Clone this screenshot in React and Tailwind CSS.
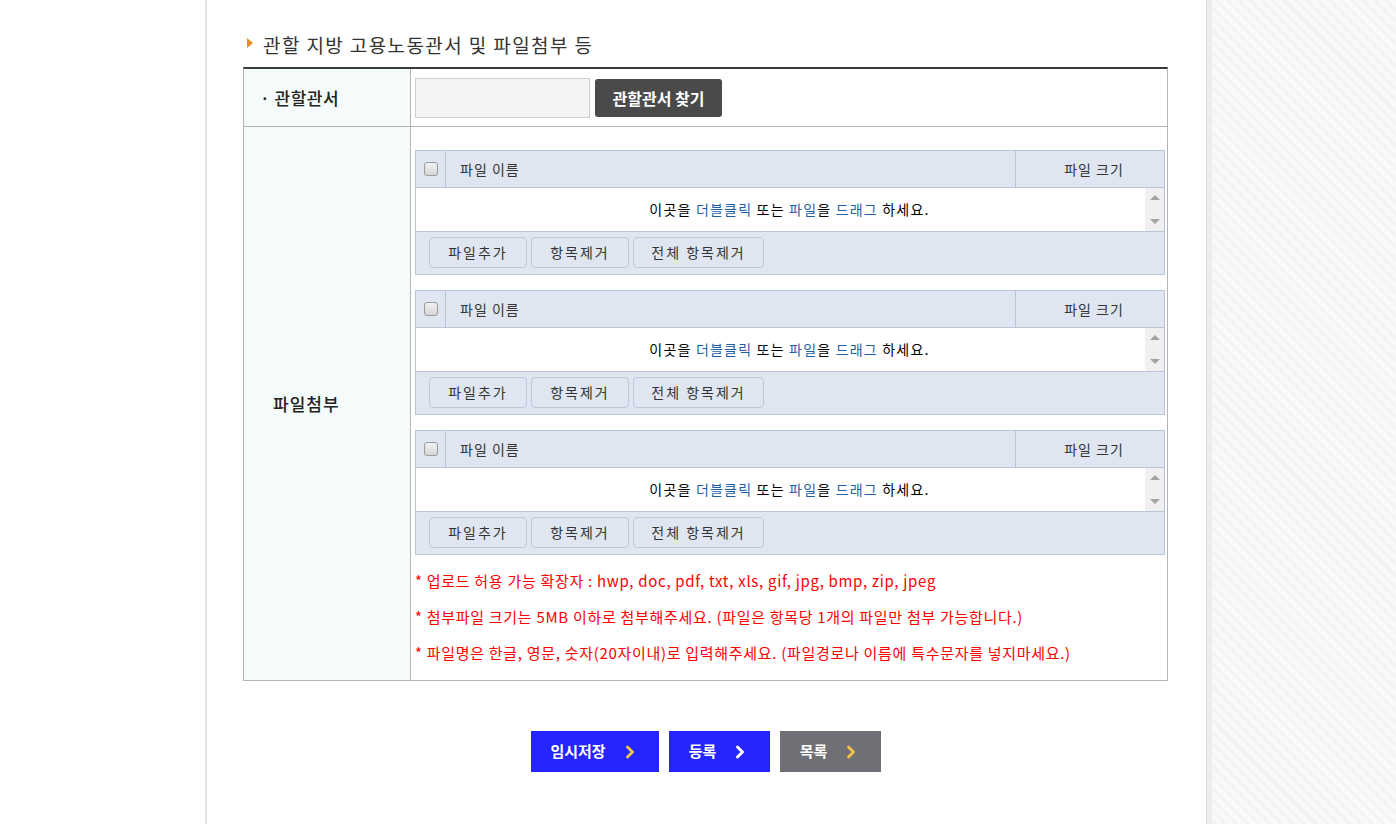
import { ChevronRight } from 'lucide-react'

const font = "font-['Noto_Sans_CJK_KR','Noto_Sans',sans-serif]"

function Checkbox() {
  return (
    <span className="block w-[14px] h-[14px] rounded-[3px] border border-[#9a9a9a] bg-gradient-to-b from-[#f2f2f2] to-[#d6d6d6]" />
  )
}

function Scrollbar() {
  return (
    <div className="w-[19px] bg-[#f0f0f0] flex flex-col items-center justify-between py-[7px]">
      <span className="w-0 h-0 border-x-[5px] border-x-transparent border-b-[5px] border-b-[#a3a3a3]" />
      <span className="w-0 h-0 border-x-[5px] border-x-transparent border-t-[5px] border-t-[#a3a3a3]" />
    </div>
  )
}

function SmallButton({ children, w }) {
  return (
    <button className={`${w} h-[31px] rounded-[4px] border border-[#bcc8d8] bg-[#dfe6f1] text-[14px] text-[#333] tracking-[2px]`}>
      {children}
    </button>
  )
}

function UploadBox() {
  return (
    <div className="border border-[#bac5d6] w-[750px]">
      <div className="flex h-[37px] bg-[#dfe6f1] border-b border-[#bac5d6] text-[14px] text-[#333] tracking-[1px]">
        <div className="w-[30px] flex items-center justify-center border-r border-[#bac5d6]">
          <Checkbox />
        </div>
        <div className="flex-1 flex items-center pl-[14px] border-r border-[#bac5d6]">파일 이름</div>
        <div className="w-[148px] flex items-center justify-center pl-[8px]">파일 크기</div>
      </div>
      <div className="flex h-[44px] bg-white border-b border-[#bac5d6]">
        <div className="flex-1 flex items-center justify-center pl-[18px] text-[14px] text-black tracking-[1.2px]">
          이곳을&nbsp;<span className="text-[#1f5fa8]">더블클릭</span>&nbsp;또는&nbsp;
          <span className="text-[#1f5fa8]">파일</span>을&nbsp;<span className="text-[#1f5fa8]">드래그</span>&nbsp;하세요.
        </div>
        <Scrollbar />
      </div>
      <div className="flex gap-[4px] h-[42px] bg-[#dfe6f1] pl-[13px] pt-[5px]">
        <SmallButton w="w-[98px]">파일추가</SmallButton>
        <SmallButton w="w-[98px]">항목제거</SmallButton>
        <SmallButton w="w-[131px]">전체 항목제거</SmallButton>
      </div>
    </div>
  )
}

function ActionButton({ children, bg, chevron, w }) {
  return (
    <button className={`${w} ${bg} h-[41px] flex items-center justify-center gap-[14px] text-white text-[15px] font-bold`}>
      <span>{children}</span>
      <ChevronRight size={20} strokeWidth={3.5} className={chevron} />
    </button>
  )
}

export default function App() {
  return (
    <div className={`flex h-[824px] overflow-hidden bg-white ${font}`}>
      <div className="w-[205px] shrink-0 bg-white" />
      <main className="w-[1001px] shrink-0 border-l-2 border-[#e2e2e2] pl-[36px] pt-[31px]">
        <h2 className="flex items-center gap-[10px] pl-[4px] text-[19px] text-[#333] leading-[28px] tracking-[1.4px]">
          <span className="w-0 h-0 border-y-[5px] border-y-transparent border-l-[6px] border-l-[#f08a1c] -mt-[4px]" />
          관할 지방 고용노동관서 및 파일첨부 등
        </h2>

        <div className="mt-[8px] w-[925px] border-t-2 border-[#3a3a3a] border-x border-b border-x-[#b5b5b5] border-b-[#b5b5b5] text-[#222]">
          <div className="flex h-[58px] border-b border-[#b5b5b5]">
            <div className="w-[167px] shrink-0 bg-[#f5fafa] border-r border-[#b5b5b5] flex items-center pl-[16px] text-[17px] font-medium tracking-[0.5px]">
              · 관할관서
            </div>
            <div className="flex items-center gap-[5px] pl-[4px]">
              <input className="w-[175px] h-[40px] bg-[#f4f4f4] border border-[#cfcfcf] outline-none" />
              <button className="w-[127px] h-[38px] rounded-[3px] bg-[#4a4a4a] text-white text-[16px] font-bold">
                관할관서 찾기
              </button>
            </div>
          </div>

          <div className="flex">
            <div className="w-[167px] shrink-0 bg-[#f5fafa] border-r border-[#b5b5b5] flex items-center pl-[29px] text-[17px] font-medium tracking-[1px]">
              파일첨부
            </div>
            <div className="flex-1 pl-[4px] pt-[23px] pb-[9px]">
              <div className="flex flex-col gap-[15px]">
                <UploadBox />
                <UploadBox />
                <UploadBox />
              </div>
              <ul className="mt-[8px] flex flex-col text-[15px] text-[#ff0000] leading-[36px] tracking-[0.7px]">
                <li>* 업로드 허용 가능 확장자 : hwp, doc, pdf, txt, xls, gif, jpg, bmp, zip, jpeg</li>
                <li>* 첨부파일 크기는 5MB 이하로 첨부해주세요. (파일은 항목당 1개의 파일만 첨부 가능합니다.)</li>
                <li>* 파일명은 한글, 영문, 숫자(20자이내)로 입력해주세요. (파일경로나 이름에 특수문자를 넣지마세요.)</li>
              </ul>
            </div>
          </div>
        </div>

        <div className="mt-[50px] flex justify-center gap-[10px] pr-[37px]">
          <ActionButton w="w-[128px]" bg="bg-[#2525ff]" chevron="text-[#f2c14e]">임시저장</ActionButton>
          <ActionButton w="w-[101px]" bg="bg-[#2525ff]" chevron="text-white">등록</ActionButton>
          <ActionButton w="w-[101px]" bg="bg-[#6f7075]" chevron="text-[#f2c14e]">목록</ActionButton>
        </div>
      </main>
      <div className="w-[6px] shrink-0 bg-[#ededed] border-l border-[#d9d9d9]" />
      <div className="flex-1 bg-[#f7f7f7] bg-[repeating-linear-gradient(45deg,#f3f3f3_0px,#f3f3f3_3px,#f9f9f9_3px,#f9f9f9_8px),repeating-linear-gradient(-45deg,#f3f3f3_0px,#f3f3f3_3px,transparent_3px,transparent_8px)]" />
    </div>
  )
}
